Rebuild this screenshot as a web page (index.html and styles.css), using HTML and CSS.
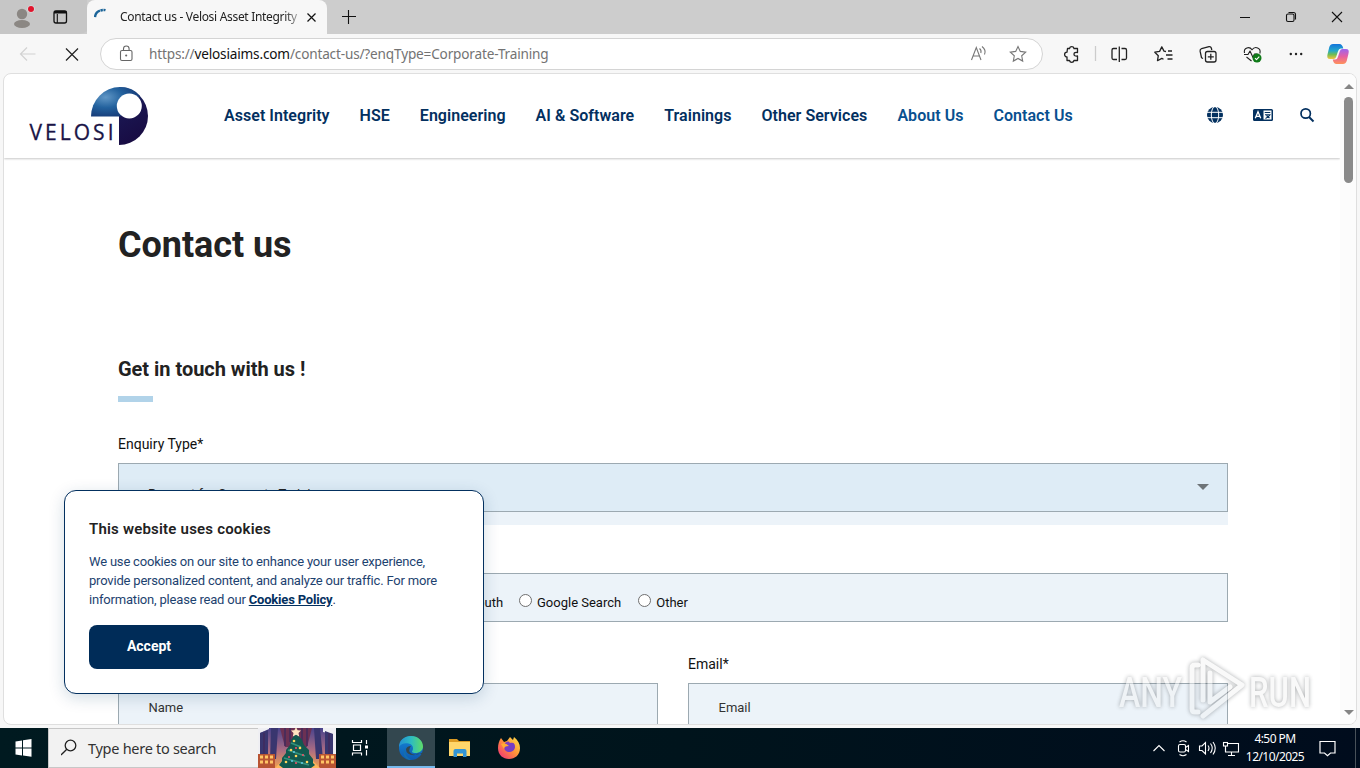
FILE: index.html
```html
<!DOCTYPE html>
<html lang="en">
<head>
<meta charset="utf-8">
<title>Contact us - Velosi Asset Integrity</title>
<link rel="stylesheet" href="styles.css">
</head>
<body>
<div class="desktop">
  <div class="tabstrip">
    <svg class="profile" width="87" height="34" viewBox="0 0 87 34">
      <path d="M0 0H91V26Q87 34 79 34H0Z" fill="#c6c6c6"/>
      <circle cx="22" cy="14" r="5.2" fill="#8b8783"/><ellipse cx="22" cy="24" rx="8" ry="4" fill="#8b8783"/>
      <circle cx="31" cy="9" r="3.6" fill="#e2e2e2"/><circle cx="31" cy="9" r="3" fill="#e0142c"/>
      <rect x="54" y="11" width="12.5" height="12" rx="2" fill="none" stroke="#111" stroke-width="1.3"/>
      <path d="M54 12.2h12.5" stroke="#111" stroke-width="2.6"/><path d="M57.3 14v9" stroke="#111" stroke-width="1.1"/>
    </svg>
    <div class="tab">
      <svg class="spin" width="14" height="14" viewBox="0 0 14 14"><path d="M1 9A7.5 7.5 0 0 1 6 2.7" fill="none" stroke="#1c6599" stroke-width="2.4"/><path d="M6.5 2.6A8 8 0 0 1 11.5 2.2" fill="none" stroke="#1c6599" stroke-width="2.4" stroke-dasharray="2.4 .6"/></svg>
      <span class="tab-title">Contact us - Velosi Asset Integrity</span>
      <svg class="tab-x" width="9" height="9" viewBox="0 0 9 9"><path d="M.5.5l8 8M8.5.5l-8 8" stroke="#111" stroke-width="1.2"/></svg>
    </div>
    <svg class="plus" width="14" height="14" viewBox="0 0 14 14"><path d="M0 6.500h14M6.500 0v14" stroke="#111" stroke-width="1.1"/></svg>
    <svg class="wincontrols" width="120" height="34" viewBox="1240 0 120 34" fill="none" stroke="#111" stroke-width="1.1">
      <path d="M1240 17.500h10M1332 12l10 10M1342 12l-10 10"/><rect x="1286.500" y="14" width="7.500" height="7.500" rx="1.500"/><path d="M1288.500 12.500h5q2 0 2 2v5"/>
    </svg>
  </div>
  <div class="toolbar">
    <svg class="nav-icons" width="100" height="40" viewBox="0 34 100 40" fill="none"><path d="M20.500 54H35.500M27 47.500L20.500 54l6.500 6.500" stroke="#d2d2d2" stroke-width="1.2"/><path d="M66 48.500l12 12M78 48.500l-12 12" stroke="#222" stroke-width="1.2"/></svg>
    <div class="address">
      <svg width="14" height="17" viewBox="0 0 14 17" fill="none" stroke="#666" stroke-width="1.1"><rect x="1.500" y="5.500" width="11.500" height="10" rx="1.500"/><path d="M4.500 5.500V3.800a2.800 2.800 0 0 1 5.600 0V5.500"/><circle cx="7.200" cy="10.500" r=".5" fill="#666"/></svg>
      <span class="url">https://<b>velosiaims.com</b>/contact-us/?enqType=Corporate-Training</span>
      <svg class="address-tools" width="60" height="22" viewBox="970 43 60 22" fill="none" stroke="#777" stroke-width="1.1"><path d="M971.500 60l4.800-12.500L981 60M973 56h6.600M979.500 48.500q2.200 1.800 1.300 4.500M982 46.500q4.500 3.500 2.500 8"/><path d="M1018 46.500l2.300 4.900 5.400.7-4 3.700 1 5.300-4.700-2.600-4.700 2.600 1-5.300-4-3.700 5.400-.7Z"/></svg>
    </div>
    <svg class="browser-tools" width="310" height="40" viewBox="1050 34 310 40" fill="none" stroke="#222" stroke-width="1.3" stroke-linejoin="round">
      <defs>
        <linearGradient id="ca" x1="0" y1="0" x2="0" y2="1"><stop stop-color="#1374dc"/><stop offset=".45" stop-color="#25a9c9"/><stop offset=".7" stop-color="#71bd54"/><stop offset="1" stop-color="#f7c43e"/></linearGradient>
        <linearGradient id="cb" x1="0" y1="0" x2="0" y2="1"><stop stop-color="#9c64ef"/><stop offset=".5" stop-color="#e660a3"/><stop offset="1" stop-color="#ff925a"/></linearGradient>
      </defs>
      <path d="M1067.500 48.500h2a2.300 2.300 0 0 1 4.500 0h3.500v4q-3.500-.5-3.500 1.700t3.500 1.800v4.500h-3.500a2.300 2.300 0 0 1-4.500 0h-2.500V57a2.400 2.400 0 0 1 0-4.800Z"/>
      <path d="M1095.500 46v15" stroke="#ccc"/>
      <path d="M1117 48.500h-3.500q-1.500 0-1.500 1.500v8q0 1.500 1.500 1.500h3.500M1121.500 48.500h3.500q1.500 0 1.500 1.500v8q0 1.500-1.500 1.500h-3.500M1119.300 46.500v15.500"/>
      <path d="M1166 51.500l-2-.4-2.200-4.200-2.200 4.500-4.800.8 3.500 3.500-.8 5 4.300-2.300 1.700.9M1168 51h4M1166 55h6.500M1167.500 59h5"/>
      <path d="M1203 58.500l-1.500-.8-1.400-6.500q-.3-2 1.500-2.500l7.400-2q1.800-.3 2.300 1.300l.5 2"/><rect x="1205.500" y="51.500" width="10.500" height="10.500" rx="2"/><path d="M1210.800 53.800v6M1207.800 56.800h6"/>
      <path d="M1244.500 53c-1.200-5.500 5-7 7.500-3.200 3-4.300 9.500-2 7.800 3.700M1246.500 57l5 4M1244 54.500h4l2-3.500 3 6.500 1.500-3.500h3" stroke-width="1.100"/><circle cx="1257" cy="58" r="4.500" fill="#0f7a18" stroke="none"/><path d="M1255 58.200l1.500 1.500 2.800-3" stroke="#fff" stroke-width="1.100"/>
      <g fill="#222" stroke="none"><circle cx="1290.800" cy="54" r="1.200"/><circle cx="1296" cy="54" r="1.200"/><circle cx="1301.200" cy="54" r="1.200"/></g>
      <g stroke="none"><path d="M1333 44h6.500q2.800 0 3.800 4.500h-2.500q-2 0-2.700 2.500l-2 6q-.6 2-2.600 2h-3.500q-3.800 0-2.400-5l1.700-7q1-3 3.700-3Z" fill="url(#ca)"/><path d="M1343 64h-6.500q-2.800 0-3.800-4.500h2.500q2 0 2.700-2.500l2-6q.6-2 2.600-2h3.500q3.800 0 2.400 5l-1.700 7q-1 3-3.700 3Z" fill="url(#cb)"/></g>
    </svg>
  </div>

  <div class="viewport">
    <div class="page">
      <header class="site-header">
        <svg class="logo" width="120" height="60" viewBox="29 86 120 60">
          <defs>
            <radialGradient id="lb" cx=".3" cy=".35" r=".7"><stop stop-color="#6197c6"/><stop offset=".5" stop-color="#23629e"/><stop offset="1" stop-color="#173b78"/></radialGradient>
            <linearGradient id="ld" x1="0" y1="0" x2=".3" y2="1"><stop stop-color="#204884"/><stop offset=".5" stop-color="#1a1550"/><stop offset="1" stop-color="#180c43"/></linearGradient>
          </defs>
          <path d="M119 87A29 29 0 0 1 119 145Z" fill="url(#ld)"/>
          <path d="M91 116.500A29 29.500 0 0 1 120 87Q133 87 140 96L120 116.500Z" fill="url(#lb)"/>
          <circle cx="129.300" cy="106" r="12.500" fill="#fff"/>
          <text class="logo-text" x="29.500" y="139.500" textLength="84">VELOSI</text>
        </svg>
        <nav class="menu">
          <a>Asset Integrity</a><a>HSE</a><a>Engineering</a><a>AI &amp; Software</a><a>Trainings</a><a>Other Services</a><a class="blue">About Us</a><a class="blue">Contact Us</a>
        </nav>
        <svg class="header-icons" width="110" height="20" viewBox="1206 105 110 20">
          <circle cx="1215" cy="115" r="8" fill="#03305f"/><g fill="none" stroke="#fff" stroke-width="1"><ellipse cx="1215" cy="115" rx="3.700" ry="8.500"/><path d="M1207 112.300h16M1207 117.700h16"/></g>
          <rect x="1253" y="109" width="20" height="12" rx="1.500" fill="#03305f"/><rect x="1263.500" y="110.500" width="8" height="9" fill="#fff"/>
          <path d="M1255.300 118.300l2.700-6.500 2.700 6.500M1256.300 116.300h3.400" fill="none" stroke="#fff" stroke-width="1.300"/><path d="M1264.700 112.500h5.600M1265 114.800h5q-1 2-4.500 3.700M1266.500 115.500l3 2.500" fill="none" stroke="#03305f" stroke-width="1.100"/>
          <circle cx="1305.700" cy="113.500" r="4.700" fill="none" stroke="#03305f" stroke-width="1.700"/><path d="M1309 117l4.500 4.500" stroke="#03305f" stroke-width="2"/>
        </svg>
      </header>
      <main class="content">
        <h1>Contact us</h1>
        <h2>Get in touch with us !</h2>
        <div class="rule"></div>
        <label class="label">Enquiry Type*</label>
        <div class="select"><span>Request for Corporate Training</span><i class="caret"></i></div>
        <div class="select-tail"></div>
        <div class="radios">
          <span>Word of Mouth</span>
          <span class="option"><i class="radio"></i>Google Search</span>
          <span class="option"><i class="radio"></i>Other</span>
        </div>
        <div class="fields">
          <div class="field"><label>Name*</label><div class="input">Name</div></div>
          <div class="field"><label>Email*</label><div class="input">Email</div></div>
        </div>
      </main>
    </div>
    <div class="scrollbar"><i class="up"></i><div class="thumb"></div><i class="down"></i></div>
  </div>

  <div class="taskbar">
    <svg class="start" width="48" height="40" viewBox="0 0 48 40" fill="#fff"><path d="M15.500 13.500l6.500-1v7h-6.500ZM23 12.300l8.500-1.200V19.500H23ZM15.500 20.500H22v7l-6.500-1ZM23 20.500h8.500v8.200L23 27.500Z"/></svg>
    <div class="search">
      <svg width="18" height="18" viewBox="0 0 18 18" fill="none" stroke="#222" stroke-width="1.300"><circle cx="9.500" cy="6.500" r="5.300"/><path d="M5.800 10.200L0 16"/></svg>
      <span class="search-text">Type here to search</span>
      <svg class="tree" width="78" height="40" viewBox="0 0 78 40">
        <defs><linearGradient id="sky" x1="0" y1="0" x2="0" y2="1"><stop stop-color="#48438d"/><stop offset=".55" stop-color="#aa6b83"/><stop offset="1" stop-color="#f4a24f"/></linearGradient></defs>
        <rect width="78" height="40" fill="#efeff3"/>
        <path d="M2 40V5l9-4V0h54v4l10 2v34Z" fill="url(#sky)"/>
        <path d="M2 5l8-3v24H2ZM13 0h7l-2 31h-6ZM56 0h6l3 31h-7ZM67 3l8 3v20h-8Z" fill="#39366f"/><path d="M22 0h32L49 19H27Z" fill="#6c3153"/>
        <path d="M27 0v18M32 0v14M44 0v14M49 0v18M6 5v21M71 5v21" stroke="#402b5d" stroke-width="1.500"/>
        <path d="M0 26h17v14H0ZM61 26h17v14H61Z" fill="#b85432"/><path d="M2 29h13M2 34h13M63 29h13M63 34h13" stroke="#ffc565" stroke-width="3" stroke-dasharray="3 2"/>
        <path d="M17 40l8-8h29l8 8Z" fill="#ffb65c"/>
        <path d="M38 5l6 7 2 5 5 5v4l4 5v4l2 2-4 3H25l-4-3 3-4v-3l4-5v-3l4-5 1-5Z" fill="#12594f"/><path d="M33 15l10 4M30 22l17 6M26 30l25 7" stroke="#32917c" stroke-width="1.800"/>
        <g fill="#ffd45b"><circle cx="36" cy="13" r="1.300"/><circle cx="42" cy="20" r="1.300"/><circle cx="33" cy="22" r="1.300"/><circle cx="38" cy="28" r="1.300"/><circle cx="49" cy="34" r="1.300"/><circle cx="28" cy="34" r="1.300"/></g><g fill="#eb5368"><circle cx="38" cy="20" r="1.100"/><circle cx="31" cy="29" r="1.100"/><circle cx="45" cy="27" r="1.100"/><circle cx="38" cy="35" r="1.100"/></g><g fill="#61c9e5"><circle cx="34" cy="33" r="1"/><circle cx="44" cy="35" r="1"/><circle cx="36" cy="24" r="1"/></g>
        <path d="M38 -1l1.600 3.300 3.400.3-2.500 2.400.7 3.500L38 6.700 34.800 8.500l.7-3.500L33 2.600l3.400-.3Z" fill="#ffe4c0"/>
      </svg>
    </div>
    <svg class="apps" width="200" height="40" viewBox="336 728 200 40">
      <defs>
        <linearGradient id="ea" x1="0" y1="0" x2="1" y2="0"><stop stop-color="#238fd3"/><stop offset=".5" stop-color="#2dbbc1"/><stop offset="1" stop-color="#5fdc66"/></linearGradient>
        <linearGradient id="eb" x1="0" y1="0" x2="0" y2="1"><stop stop-color="#1686d8"/><stop offset="1" stop-color="#0d5ab0"/></linearGradient>
        <linearGradient id="ff" x1="1" y1="0" x2="0" y2="1"><stop stop-color="#ffe54b"/><stop offset=".45" stop-color="#ff9638"/><stop offset="1" stop-color="#f1257e"/></linearGradient>
      </defs>
      <g fill="none" stroke="#fff" stroke-width="1.200"><path d="M352.500 740v2.500h9V740M352.500 755.500V753h9v2.500M353.500 745h7v5.500h-7ZM366.500 740v4M366.500 750v5.500"/><path d="M365 747h3" stroke-width="3"/></g>
      <rect x="387" y="728" width="48" height="40" fill="#33474f"/><rect x="387" y="766" width="48" height="2" fill="#76b9ed"/>
      <circle cx="411" cy="748" r="12" fill="url(#eb)"/>
      <path d="M399 747c0-7 5.500-11 12-11 7 0 12 5 12 10.500 0 4-3.500 6.500-7.500 6.500-3.500 0-4-1.500-3-2.500 1-1.500 1-6-4-7-4-.8-8 .5-9.500 3.500Z" fill="url(#ea)"/>
      <path d="M411 746q-4 5 1 8 4 2 9.500-1l1.200-.5-.7 1.500-4-.4-4 1.600q-8-.5-8-6 .5-3 5-3.200Z" fill="#33474f"/><path d="M408 746c-4 2-5 9 3 14-8 0-10-10-3-14Z" fill="#156eae"/>
      <path d="M449 739h8l2 2h11v5h-21Z" fill="#dc9b23"/><path d="M449 742h21v14h-21Z" fill="#ffd76b"/><path d="M453.500 757v-6q0-2 2-2h9q2 0 2 2v6h-3.500v-3.500h-6v3.500Z" fill="#3295d5"/>
      <path d="M501 738l3 4 3-1 3-4 3 3 1-3c4 3 6 7 6 11 0 7-5 11-11 11s-11-4-11-11c0-4 1-7 3-10Z" fill="url(#ff)"/><path d="M505 743c2-2 4-2 5 0 4-1 5 1 5 4s-3 5-6 5c-4 0-6-4-4-7Z" fill="#783dc4"/><path d="M501 744q4-2 8 2-5 0-5 3Z" fill="#ffab32"/>
    </svg>
    <svg class="tray" width="95" height="40" viewBox="1150 728 95 40" fill="none" stroke="#fff" stroke-width="1.100">
      <path d="M1153.500 751l5.500-5.500 5.500 5.500"/><rect x="1178.500" y="744.500" width="7" height="7.500" rx="1.500"/><path d="M1185.500 747.500l3-2v6l-3-2M1179.500 742q3.500-2.500 7 0M1179.500 754.500q3.500 2.500 7 0"/>
      <path d="M1199.500 746h2.500l3.500-3.500v11.500l-3.500-3.500h-2.500ZM1208 745.500q2 2.500 0 5.500M1210.500 743.500q3.500 4.500 0 9.500M1213 742q4.500 6 0 12.500"/>
      <path d="M1228 743.500h10.500v8.500h-13v-4M1231.500 752v3M1228 755.500h7"/><rect x="1223.500" y="742.500" width="4" height="3.500"/><path d="M1225.500 746v6"/>
    </svg>
    <div class="clock"><span>4:50 PM</span><span class="date">12/10/2025</span></div>
    <svg class="notify" width="17" height="17" viewBox="0 0 17 17" fill="none" stroke="#fff" stroke-width="1.200"><path d="M1 1.500h15v11.500h-4.500l-3 2.800-3-2.800H1Z"/></svg>
    <div class="peek"></div>
  </div>

  <section class="cookie">
    <h3>This website uses cookies</h3>
    <p>We use cookies on our site to enhance your user experience,<br>provide personalized content, and analyze our traffic. For more<br>information, please read our <a>Cookies Policy</a>.</p>
    <button>Accept</button>
  </section>
  <svg class="watermark" width="200" height="68" viewBox="1115 655 200 68">
    <text x="1119" y="707" textLength="63" lengthAdjust="spacingAndGlyphs">ANY</text><text x="1249" y="707" textLength="62" lengthAdjust="spacingAndGlyphs">RUN</text>
    <path d="M1198 665h-3q-3 0-3 3v41q0 3 3 3h3M1203 660v40M1203 660l39 25-39 31M1210 673v29l20-15" class="wm-line"/>
  </svg>
</div>
</body>
</html>
```
FILE: styles.css
```css
* { box-sizing: border-box; }
body { margin: 0; overflow: hidden; font-family: Roboto, "Liberation Sans", sans-serif; }
svg { display: block; flex: none; }
.desktop { position: relative; width: 1360px; height: 768px; display: flex; flex-direction: column; background: #f7f7f7; overflow: hidden; }
.tabstrip { height: 34px; flex: none; display: flex; align-items: center; background: #cdcdcd; font-family: "Noto Sans", sans-serif; }
.tab { width: 240px; height: 34px; padding: 0 11px 0 7px; display: flex; align-items: center; background: #f7f7f7; border-radius: 8px 8px 0 0; }
.spin { margin-bottom: 5px; }
.tab-title { width: 179px; margin: 0 0 1px 12px; font-size: 12px; letter-spacing: -0.31px; white-space: nowrap; color: #222; mask-image: linear-gradient(to right, #000 164px, rgba(0,0,0,.3) 179px); }
.tab-x { margin-left: 8px; }
.plus { margin-left: 15px; }
.wincontrols { margin-left: auto; }
.toolbar { height: 39px; flex: none; display: flex; align-items: center; }
.address { width: 943px; height: 32px; padding: 0 12px 0 18px; display: flex; align-items: center; background: #fff; border: 1px solid #d4d4d4; border-radius: 16px; font-family: "Noto Sans", sans-serif; }
.url { margin-left: 16px; font-size: 13.6px; letter-spacing: -0.17px; color: #737373; white-space: nowrap; }
.url b { font-weight: 400; color: #111; }
.address-tools { margin-left: auto; }
.browser-tools { margin-left: 7px; }
.viewport { height: 652px; margin: 0 3px; flex: none; display: flex; overflow: hidden; background: #fff; border: 1px solid #dfdfdf; border-radius: 8px; }
.page { width: 1336px; overflow: hidden; }
.scrollbar { width: 16px; padding: 10px 0 9px 1px; display: flex; flex-direction: column; align-items: center; background: #fcfcfc; }
.scrollbar .up { border: 5px solid transparent; border-top: 0; border-bottom: 5px solid #858585; }
.scrollbar .down { margin-top: auto; border: 5px solid transparent; border-bottom: 0; border-top: 5px solid #858585; }
.thumb { width: 9px; height: 86px; margin-top: 8px; background: #8a8a8a; border-radius: 5px; }
.site-header { height: 84px; display: flex; align-items: center; padding-left: 25px; box-shadow: 0 1px 2px rgba(0,0,0,.22); }
.logo-text { font-family: "Open Sans", sans-serif; font-size: 21px; fill: #1a1446; stroke: #1a1446; stroke-width: .3px; }
.menu { margin-left: 75px; padding-bottom: 2px; display: flex; gap: 30px; font-size: 16px; font-weight: 600; letter-spacing: .04px; color: #03305f; white-space: nowrap; }
.menu .blue { color: #08508f; }
.header-icons { margin: 0 24px 2px auto; }
.content { width: 1110px; margin-left: 114px; }
.content h1 { margin: 66px 0 0; font-size: 36px; line-height: 42px; font-weight: 700; letter-spacing: -.05px; color: #222; }
.content h2 { margin: 91px 0 0; font-size: 20px; line-height: 24px; font-weight: 700; letter-spacing: -.03px; color: #222; }
.rule { width: 35px; height: 6px; margin-top: 15px; background: #b1d3e9; }
.label { display: block; margin-top: 32px; font-size: 14px; line-height: 20px; color: #111; }
.select { height: 49px; margin-top: 9px; padding: 12px 18px 0 29px; display: flex; justify-content: space-between; border: 1px solid #9ca9b1; background: #deecf6; font-size: 13px; line-height: 36px; color: #222; }
.caret { width: 0; height: 0; margin-top: 8px; border: 6px solid transparent; border-top-color: #6e7478; border-bottom: 0; }
.select-tail { height: 13px; background: #ecf3f9; }
.radios { height: 49px; margin-top: 48px; padding: 9px 0 0 298px; display: flex; border: 1px solid #9ca9b1; background: #ecf3f9; font-size: 13px; line-height: 39px; color: #111; }
.radios > span:first-child { width: 85px; text-align: right; white-space: nowrap; }
.option { display: flex; margin-left: 17px; gap: 5px; }
.radio { width: 13px; height: 13px; margin-top: 11px; background: #fff; border: 1px solid #6f6f6f; border-radius: 50%; }
.fields { display: flex; gap: 30px; margin-top: 32px; }
.field { width: 540px; font-size: 14px; line-height: 20px; color: #111; }
.input { height: 49px; margin-top: 9px; padding-left: 29.5px; line-height: 47px; font-size: 13px; border: 1px solid #9ca9b1; background: #ecf3f9; color: #333; }
.cookie { position: absolute; left: 64px; top: 490px; width: 420px; height: 204px; padding: 28px 24px; background: #fff; border: 1px solid #03305f; border-radius: 12px; box-shadow: 0 4px 16px rgba(0,60,100,.18); }
.cookie h3 { margin: 0; font-size: 15px; line-height: 20px; font-weight: 600; letter-spacing: .2px; color: #222; }
.cookie p { margin: 13px 0 16px; font-size: 13px; line-height: 19px; letter-spacing: -.19px; color: #1d426f; white-space: nowrap; }
.cookie a { font-weight: 700; color: #03305f; text-decoration: underline; }
.cookie button { display: block; width: 120px; height: 44px; padding: 0 0 2px; border: 0; border-radius: 8px; background: #002c58; color: #fff; font: 700 14px Roboto, sans-serif; }
.taskbar { height: 40px; margin-top: auto; flex: none; display: flex; align-items: center; background: linear-gradient(to right, #001a20, #00141c 50%, #000c1d); color: #fff; font-family: "Noto Sans", sans-serif; }
.search { width: 288px; height: 40px; padding-left: 12px; display: flex; align-items: center; background: #f2f2f2; border: 1px solid #c7c7c7; border-right: 0; color: #333; }
.search-text { margin-left: 9px; font-size: 14.5px; letter-spacing: -.28px; white-space: nowrap; }
.tree { margin-left: auto; }
.tray { margin-left: auto; }
.clock { width: 60px; display: flex; flex-direction: column; align-items: center; font-size: 12px; line-height: 18px; letter-spacing: -.55px; }
.notify { margin: 0 19px 0 14px; }
.peek { width: 5px; height: 40px; border-left: 1px solid #485159; }
.watermark { position: absolute; left: 1115px; top: 655px; pointer-events: none; filter: drop-shadow(0 0 2px rgba(60,65,70,.9)); opacity: .48; overflow: visible; }
.watermark text { font: 500 43px Roboto, sans-serif; fill: #f4f4f4; }
.wm-line { fill: none; stroke: #f4f4f4; stroke-width: 5; stroke-linejoin: round; stroke-linecap: round; }
```
